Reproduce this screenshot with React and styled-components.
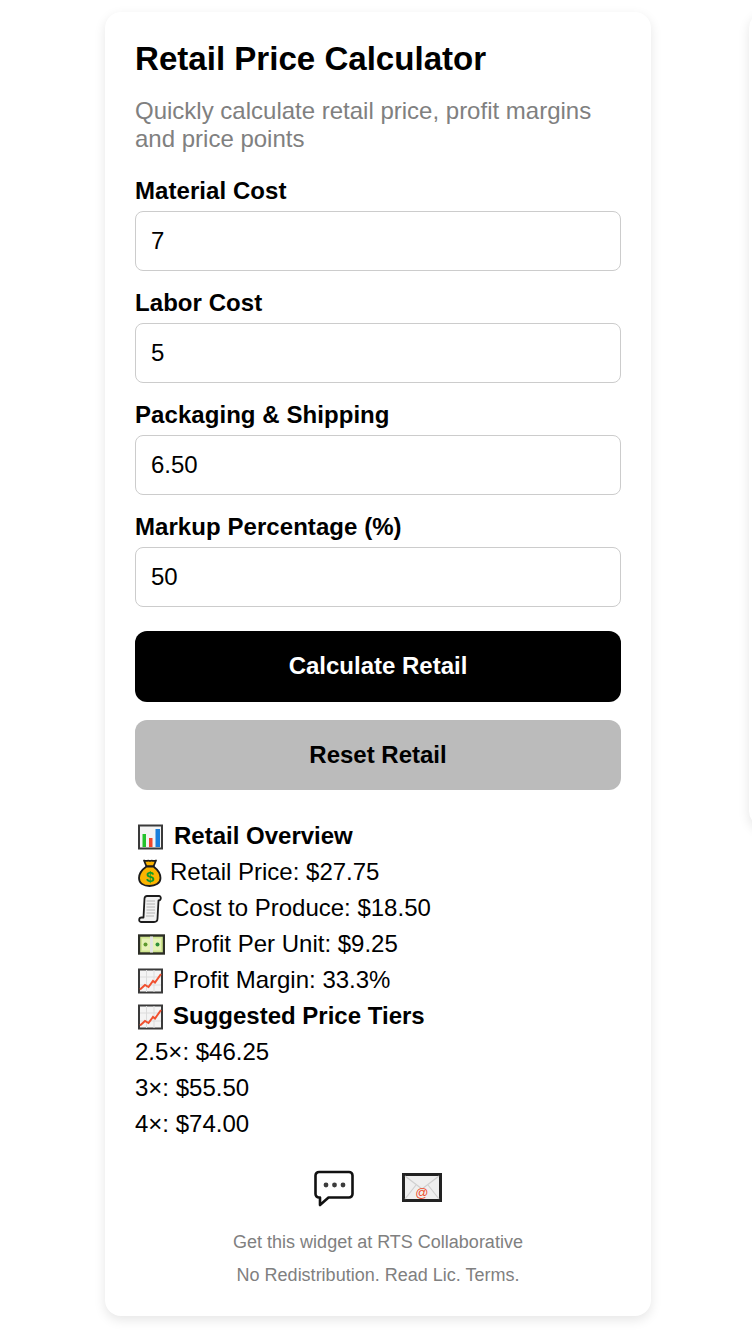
import React from "react";
import styled, { createGlobalStyle } from "styled-components";

const Global = createGlobalStyle`
  html, body { margin: 0; padding: 0; background: #fff; overflow: hidden; }
  body { font-family: "Liberation Sans", Arial, sans-serif; color: #000; }
`;

const Page = styled.div`
  width: 752px;
  height: 1336px;
  overflow: hidden;
  display: flex;
  align-items: flex-start;
  gap: 98px;
  padding: 12px 0 0 105px;
  box-sizing: border-box;
`;
const Card = styled.section`
  flex: 0 0 546px;
  box-sizing: border-box;
  padding: 28px 30px 30px;
  height: ${(p) => p.$h}px;
  background: #fff;
  border-radius: 16px;
  box-shadow: 0 4px 12px rgba(0, 0, 0, 0.1);
`;
const Title = styled.h1`
  margin: 0;
  font-size: 33.1px;
  line-height: 37px;
  font-weight: 700;
`;
const Subtitle = styled.p`
  margin: 20px 0 0;
  font-size: 24px;
  line-height: 28px;
  color: #808080;
`;
const Field = styled.div`
  margin-top: ${(p) => (p.$first ? 24 : 18)}px;
  display: flex;
  flex-direction: column;
`;
const Label = styled.label`
  font-size: 24px;
  line-height: 28px;
  font-weight: 700;
  letter-spacing: 0.06px;
  margin-bottom: 6px;
`;
const Input = styled.input`
  box-sizing: border-box;
  height: 60px;
  width: 100%;
  padding: 0 15px;
  border: 1px solid #ccc;
  border-radius: 8px;
  font: 24px "Liberation Sans", Arial, sans-serif;
  color: #000;
  background: #fff;
  outline: none;
`;
const Button = styled.button`
  display: block;
  width: 100%;
  height: ${(p) => p.$h}px;
  margin-top: ${(p) => p.$mt}px;
  padding: 0 0 ${(p) => p.$pb || 0}px;
  border: 0;
  border-radius: 12px;
  background: ${(p) => p.$bg};
  color: ${(p) => p.$fg};
  font: 700 24px "Liberation Sans", Arial, sans-serif;
`;
const Results = styled.div`
  margin-top: 28px;
  font-size: 24px;
  line-height: 36px;
`;
const Row = styled.div`
  display: flex;
  align-items: center;
  height: 36px;
  white-space: pre;
  font-weight: ${(p) => (p.$bold ? 700 : 400)};
`;
const Emoji = styled.svg`
  flex: none;
  width: ${(p) => p.$w}px;
  height: 28px;
  margin-left: 3px;
  margin-right: ${(p) => p.$mr}px;
  transform: translateY(1px);
`;
const Contact = styled.div`
  margin-top: 28px;
  display: flex;
  justify-content: center;
  gap: 48px;
`;
const ContactIcon = styled.svg`
  width: 40px;
  height: 38px;
  display: block;
`;
const Note = styled.p`
  margin: ${(p) => p.$mt}px 0 0;
  text-align: center;
  font-size: 18px;
  line-height: 21px;
  color: #808080;
`;

const Chart = () => (
  <Emoji $w={25} $mr={11} viewBox="0 0 25 28">
    <rect x="1" y="2.5" width="23" height="23" fill="#f4f4f4" stroke="#3a3a3a" strokeWidth="2" />
    <rect x="4.5" y="11" width="3.5" height="13" fill="#22c32b" />
    <rect x="11" y="15" width="3.5" height="9" fill="#f0452a" />
    <rect x="17.5" y="6" width="4.5" height="18" fill="#1a7fdc" />
  </Emoji>
);
const Bag = () => (
  <Emoji $w={24} $mr={8} viewBox="0 0 24 28">
    <path d="M6 1.5 C8 2.6 10 1 12 2 C14 1 16 2.6 18 1.5 L15.5 7.5 L8.5 7.5 Z" fill="#fdb400" stroke="#1c1c1c" strokeWidth="1.8" strokeLinejoin="round" />
    <path d="M8.5 7.5 C3.5 11 1 15 1 19 C1 24.5 6 27 11.5 27 C17 27 22.5 24.5 22.5 19 C22.5 15 20 11 15.5 7.5 Z" fill="#fdb400" stroke="#1c1c1c" strokeWidth="1.8" />
    <text x="11.8" y="23" textAnchor="middle" fontSize="15" fontWeight="700" fontFamily="Liberation Sans" fill="#0e9a2e">$</text>
  </Emoji>
);
const Receipt = () => (
  <Emoji $w={24} $mr={10} viewBox="0 0 24 28">
    <path d="M6.5 3.5 C6.5 1.5 8 1 9 1 L21 1 C23.5 1 23.5 5.5 20.5 5.5 L19.5 23.5 C19.5 26 18 27 16 27 L3 27 C0.5 27 0.5 22.5 3.5 22.5 L5.5 22.5 Z" fill="#f1f1f1" stroke="#1c1c1c" strokeWidth="1.8" strokeLinejoin="round" />
    <path d="M8.5 6h8.5M8.5 9h8.5M8.5 12h8.5M8.5 15h8.5M8.5 18h8.5M8 21h8" stroke="#b4b4b4" strokeWidth="1" />
  </Emoji>
);
const Money = () => (
  <Emoji $w={27} $mr={10} viewBox="0 0 27 28">
    <rect x="1" y="4.5" width="25" height="18" fill="#cfe58f" stroke="#2c2e26" strokeWidth="2.4" />
    <rect x="4" y="7.5" width="19" height="12" fill="#e7f2b8" />
    <circle cx="7.5" cy="13.5" r="2" fill="#5f9a2e" />
    <circle cx="19.5" cy="13.5" r="2" fill="#2f8f3a" />
    <rect x="12" y="5.5" width="3" height="16" fill="#e4e4e4" />
  </Emoji>
);
const Trend = () => (
  <Emoji $w={25} $mr={10} viewBox="0 0 25 28">
    <rect x="1" y="2.5" width="23" height="23" fill="#f4f4f4" stroke="#3a3a3a" strokeWidth="2" />
    <path d="M8.5 3v22M16 3v22M2 10h21M2 18h21" stroke="#dcdcdc" strokeWidth="1" />
    <path d="M2 22.5 L7 18 L10.5 20 L15 14 L17 15.5 L23 7" fill="none" stroke="#f0502f" strokeWidth="2" />
  </Emoji>
);

const Fields = [
  ["Material Cost", "7"],
  ["Labor Cost", "5"],
  ["Packaging & Shipping", "6.50"],
  ["Markup Percentage (%)", "50"],
];

export default function App() {
  return (
    <Page>
      <Global />
      <Card $h={1304}>
        <Title>Retail Price Calculator</Title>
        <Subtitle>Quickly calculate retail price, profit margins and price points</Subtitle>
        {Fields.map(([label, value], i) => (
          <Field key={label} $first={i === 0}>
            <Label>{label}</Label>
            <Input defaultValue={value} />
          </Field>
        ))}
        <Button $h={71} $mt={24} $pb={2} $bg="#000" $fg="#fff">Calculate Retail</Button>
        <Button $h={70} $mt={18} $bg="#bbb" $fg="#000">Reset Retail</Button>
        <Results>
          <Row $bold><Chart />Retail Overview</Row>
          <Row><Bag />Retail Price: $27.75</Row>
          <Row><Receipt />Cost to Produce: $18.50</Row>
          <Row><Money />Profit Per Unit: $9.25</Row>
          <Row><Trend />Profit Margin: 33.3%</Row>
          <Row $bold><Trend />Suggested Price Tiers</Row>
          <Row>2.5×: $46.25</Row>
          <Row>3×: $55.50</Row>
          <Row>4×: $74.00</Row>
        </Results>
        <Contact>
          <ContactIcon viewBox="0 0 40 38" aria-label="Chat">
            <path d="M5 2 H35 A3.5 3.5 0 0 1 38.5 5.5 V24 A3.5 3.5 0 0 1 35 27.5 H14.5 L6 35 V27.5 H5 A3.5 3.5 0 0 1 1.5 24 V5.5 A3.5 3.5 0 0 1 5 2 Z" fill="#fff" stroke="#111" strokeWidth="2.6" strokeLinejoin="round" />
            <circle cx="12" cy="15" r="2.4" fill="#3c3c3c" />
            <circle cx="20.5" cy="15" r="2.4" fill="#3c3c3c" />
            <circle cx="29" cy="15" r="2.4" fill="#3c3c3c" />
          </ContactIcon>
          <ContactIcon viewBox="0 0 40 38" aria-label="Email">
            <rect x="1.5" y="4.5" width="37" height="26" fill="#efefef" stroke="#222" strokeWidth="3" />
            <path d="M3 6 L20 19 L37 6 M3 29 L14 15 M37 29 L26 15" fill="none" stroke="#d0d0d0" strokeWidth="1.2" />
            <text x="19.8" y="27" textAnchor="middle" fontSize="13" fontFamily="Liberation Sans" fill="#f0502f">@</text>
          </ContactIcon>
        </Contact>
        <Note $mt={24}>Get this widget at RTS Collaborative</Note>
        <Note $mt={12}>No Redistribution. Read Lic. Terms.</Note>
      </Card>
      <Card $h={815} />
    </Page>
  );
}
